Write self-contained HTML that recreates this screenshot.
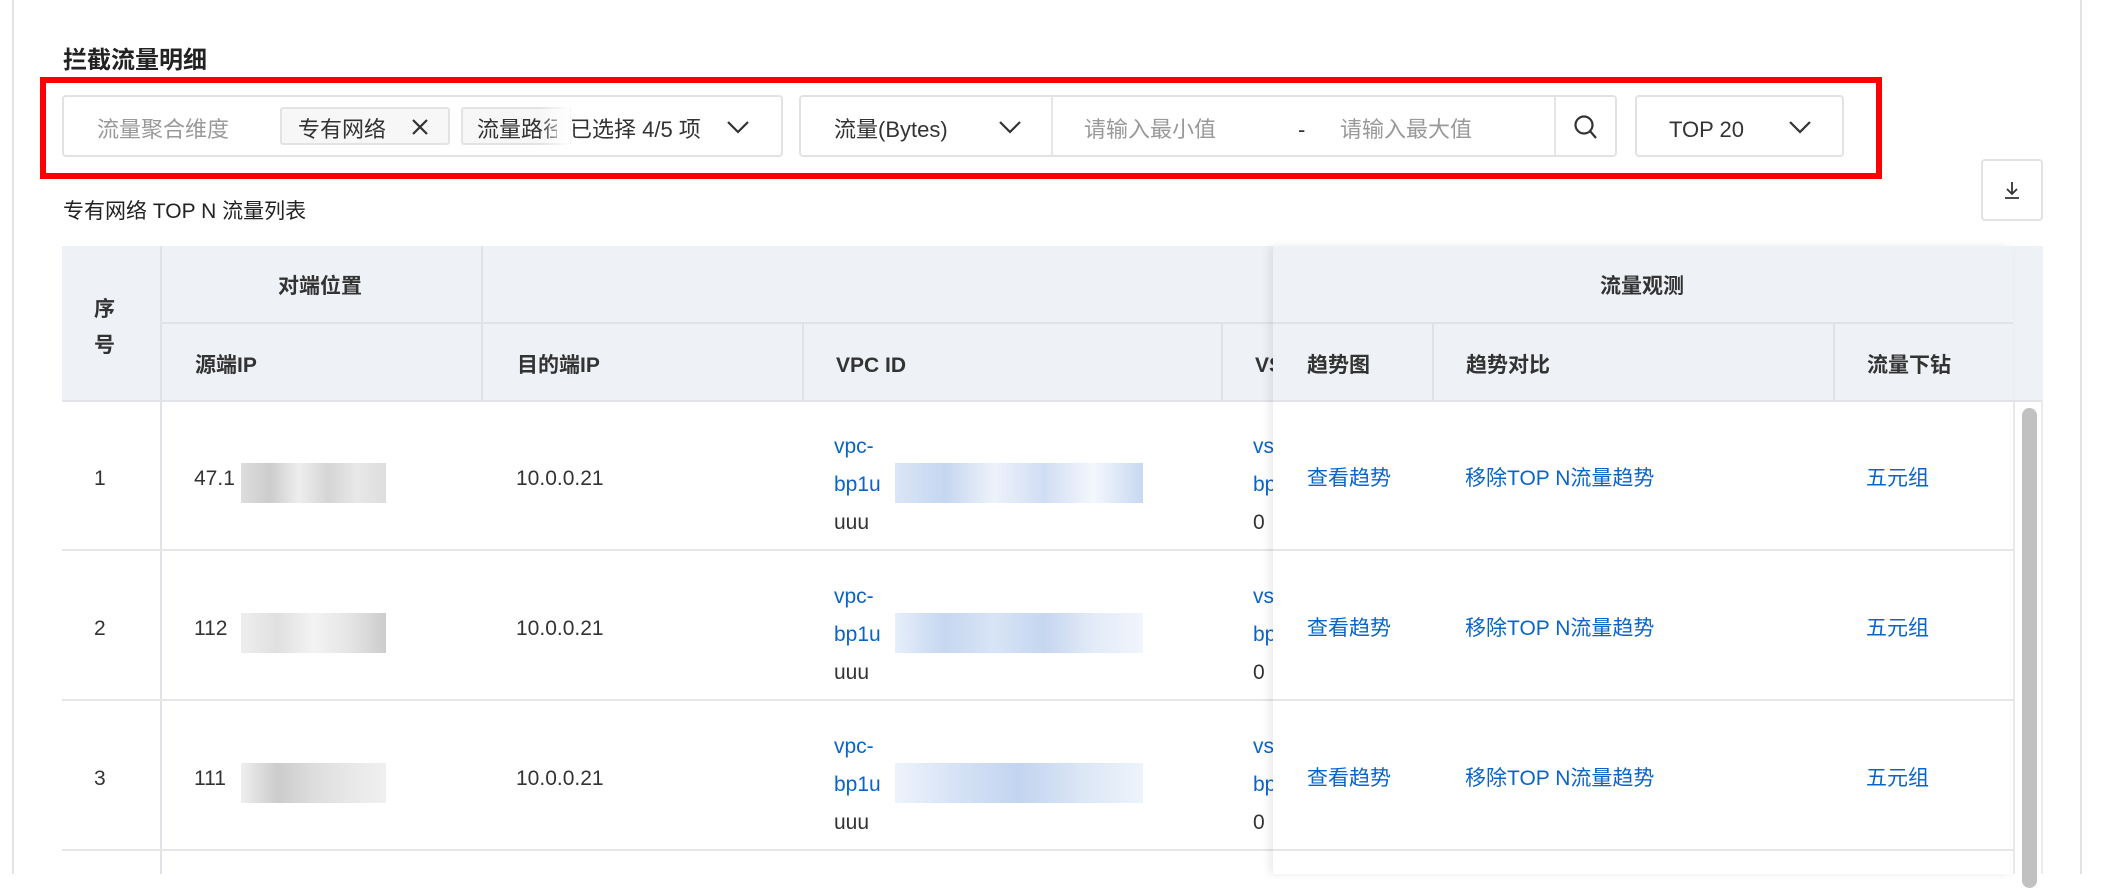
<!DOCTYPE html>
<html><head><meta charset="utf-8"><style>
*{margin:0;padding:0;box-sizing:border-box}
body{width:2102px;height:874px;background:#fff;position:relative;overflow:hidden;font-family:"Liberation Sans","Noto Sans CJK SC",sans-serif;color:#333;font-size:21px}
.a{position:absolute;white-space:nowrap;line-height:30px}
.box{position:absolute;border:2px solid #e2e2e2;border-radius:4px;background:#fff}
.ph{color:#999}
.tag{position:absolute;background:#f7f7f7;border:2px solid #e3e3e3;border-radius:3px;height:38px;top:107px}
.hd{background:#eef1f6}
.vl{position:absolute;width:2px;background:#dfe2e7}
.hl{position:absolute;height:2px;background:#e6e6e6}
.b{font-weight:bold}
.lk{color:#0a64c8}
.blk{position:absolute}
</style></head><body>
<div class="a" style="left:12px;top:0;width:2px;height:874px;background:#e3e3e3"></div>
<div class="a" style="left:2080px;top:0;width:2px;height:874px;background:#e3e3e3"></div>

<div class="a b" style="left:63px;top:46px;font-size:24px;color:#222">拦截流量明细</div>

<div class="a" style="left:40px;top:77px;width:1842px;height:102px;border:6px solid #f00"></div>

<div class="box" style="left:62px;top:95px;width:721px;height:62px"></div>
<div class="a ph" style="left:97px;top:115px;font-size:22px">流量聚合维度</div>
<div class="tag" style="left:280px;width:170px"></div>
<div class="a" style="left:298px;top:115px;font-size:22px">专有网络</div>
<svg class="a" style="left:410px;top:117px" width="20" height="20" viewBox="0 0 20 20"><path d="M3 3L17 17M17 3L3 17" stroke="#333" stroke-width="2.2"/></svg>
<div class="tag" style="left:461px;width:110px;border-right:none"></div>
<div class="a" style="left:477px;top:115px;font-size:22px;width:80px;overflow:hidden">流量路径</div>
<div class="a" style="left:540px;top:105px;width:30px;height:42px;background:linear-gradient(90deg,rgba(255,255,255,0),#fff)"></div>
<div class="a" style="left:570px;top:115px;font-size:22px">已选择 4/5 项</div>
<svg class="a" style="left:726px;top:119px" width="24" height="16" viewBox="0 0 24 16"><path d="M2 3L12 13L22 3" stroke="#333" stroke-width="2.2" fill="none"/></svg>

<div class="box" style="left:799px;top:95px;width:818px;height:62px"></div>
<div class="a" style="left:834px;top:115px;font-size:22px">流量(Bytes)</div>
<svg class="a" style="left:998px;top:119px" width="24" height="16" viewBox="0 0 24 16"><path d="M2 3L12 13L22 3" stroke="#333" stroke-width="2.2" fill="none"/></svg>
<div class="a" style="left:1051px;top:97px;width:2px;height:58px;background:#e6e6e6"></div>
<div class="a ph" style="left:1084px;top:115px;font-size:22px">请输入最小值</div>
<div class="a" style="left:1298px;top:115px;font-size:22px">-</div>
<div class="a ph" style="left:1340px;top:115px;font-size:22px">请输入最大值</div>
<div class="a" style="left:1554px;top:97px;width:2px;height:58px;background:#e6e6e6"></div>
<svg class="a" style="left:1572px;top:113px" width="28" height="28" viewBox="0 0 28 28"><circle cx="12" cy="12" r="8.5" stroke="#333" stroke-width="2.2" fill="none"/><path d="M18 18L24 25" stroke="#333" stroke-width="2.2"/></svg>

<div class="box" style="left:1635px;top:95px;width:209px;height:62px"></div>
<div class="a" style="left:1669px;top:115px;font-size:22px">TOP 20</div>
<svg class="a" style="left:1788px;top:119px" width="24" height="16" viewBox="0 0 24 16"><path d="M2 3L12 13L22 3" stroke="#333" stroke-width="2.2" fill="none"/></svg>

<div class="box" style="left:1981px;top:159px;width:62px;height:62px"></div>
<svg class="a" style="left:2002px;top:180px" width="20" height="20" viewBox="0 0 20 20"><path d="M10 2V14M5 9L10 14L15 9M3 18H17" stroke="#333" stroke-width="1.8" fill="none"/></svg>

<div class="a" style="left:63px;top:197px;font-size:21px;color:#222">专有网络 TOP N 流量列表</div>

<div class="a hd" style="left:62px;top:246px;width:1981px;height:155px"></div>
<div class="hl" style="left:161px;top:322px;width:1852px;background:#dfe2e7"></div>
<div class="hl" style="left:62px;top:400px;width:1981px;background:#e2e4e8"></div>
<div class="vl" style="left:160px;top:246px;height:628px"></div>
<div class="vl" style="left:481px;top:246px;height:155px"></div>
<div class="vl" style="left:802px;top:323px;height:78px"></div>
<div class="vl" style="left:1221px;top:323px;height:78px"></div>
<div class="a b" style="left:94px;top:292px;line-height:36px;white-space:normal;width:24px">序<br>号</div>
<div class="a b" style="left:278px;top:272px">对端位置</div>
<div class="a b" style="left:195px;top:351px">源端IP</div>
<div class="a b" style="left:517px;top:351px">目的端IP</div>
<div class="a b" style="left:836px;top:351px">VPC ID</div>
<div class="a b" style="left:1255px;top:351px">VS</div>

<div class="hl" style="left:62px;top:549px;width:1951px"></div>
<div class="hl" style="left:62px;top:699px;width:1951px"></div>
<div class="hl" style="left:62px;top:849px;width:1951px"></div>

<div class="a" style="left:94px;top:464px">1</div>
<div class="a" style="left:94px;top:614px">2</div>
<div class="a" style="left:94px;top:764px">3</div>
<div class="a" style="left:194px;top:464px">47.1</div>
<div class="a" style="left:194px;top:614px">112</div>
<div class="a" style="left:194px;top:764px">111</div>
<div class="blk" style="left:241px;top:463px;width:145px;height:40px;background:linear-gradient(90deg,#ddd,#ccc,#eee,#d5d5d5,#e8e8e8,#ddd)"></div>
<div class="blk" style="left:241px;top:613px;width:145px;height:40px;background:linear-gradient(90deg,#eee,#e0e0e0,#f3f3f3,#e5e5e5,#ccc)"></div>
<div class="blk" style="left:241px;top:763px;width:145px;height:40px;background:linear-gradient(90deg,#eee,#ccc,#ddd,#e8e8e8,#f0f0f0)"></div>
<div class="a" style="left:516px;top:464px">10.0.0.21</div>
<div class="a" style="left:516px;top:614px">10.0.0.21</div>
<div class="a" style="left:516px;top:764px">10.0.0.21</div>

<div class="a lk" style="left:834px;top:428px;line-height:38px;white-space:normal;width:60px">vpc-<br>bp1u<br><span style="color:#333">uuu</span></div>
<div class="a lk" style="left:834px;top:578px;line-height:38px;white-space:normal;width:60px">vpc-<br>bp1u<br><span style="color:#333">uuu</span></div>
<div class="a lk" style="left:834px;top:728px;line-height:38px;white-space:normal;width:60px">vpc-<br>bp1u<br><span style="color:#333">uuu</span></div>
<div class="blk" style="left:895px;top:463px;width:248px;height:40px;background:linear-gradient(90deg,#dbe6f6,#c5d6f0,#edf2fa,#d0def3,#f4f7fc,#c8d8f1)"></div>
<div class="blk" style="left:895px;top:613px;width:248px;height:40px;background:linear-gradient(90deg,#e6eefa,#c6d7f0,#d8e4f6,#c5d6f0,#e3ebf8,#f1f5fc)"></div>
<div class="blk" style="left:895px;top:763px;width:248px;height:40px;background:linear-gradient(90deg,#eef3fb,#d6e2f5,#c2d4ef,#dbe6f6,#eef3fb)"></div>
<div class="a lk" style="left:1253px;top:428px;line-height:38px;white-space:normal;width:30px">vs<br>bp<br><span style="color:#333">0</span></div>
<div class="a lk" style="left:1253px;top:578px;line-height:38px;white-space:normal;width:30px">vs<br>bp<br><span style="color:#333">0</span></div>
<div class="a lk" style="left:1253px;top:728px;line-height:38px;white-space:normal;width:30px">vs<br>bp<br><span style="color:#333">0</span></div>

<div class="a" style="left:1273px;top:246px;width:740px;height:628px;background:#fff;box-shadow:-4px 0 8px rgba(0,0,0,0.08)"></div>
<div class="a hd" style="left:1273px;top:246px;width:740px;height:155px"></div>
<div class="hl" style="left:1273px;top:322px;width:740px;background:#dfe2e7"></div>
<div class="hl" style="left:1273px;top:400px;width:740px;background:#e2e4e8"></div>
<div class="vl" style="left:1432px;top:323px;height:78px"></div>
<div class="vl" style="left:1833px;top:323px;height:78px"></div>
<div class="a b" style="left:1600px;top:272px">流量观测</div>
<div class="a b" style="left:1307px;top:351px">趋势图</div>
<div class="a b" style="left:1466px;top:351px">趋势对比</div>
<div class="a b" style="left:1867px;top:351px">流量下钻</div>
<div class="hl" style="left:1273px;top:549px;width:740px"></div>
<div class="hl" style="left:1273px;top:699px;width:740px"></div>
<div class="hl" style="left:1273px;top:849px;width:740px"></div>
<div class="a lk" style="left:1307px;top:464px">查看趋势</div>
<div class="a lk" style="left:1307px;top:614px">查看趋势</div>
<div class="a lk" style="left:1307px;top:764px">查看趋势</div>
<div class="a lk" style="left:1465px;top:464px">移除TOP N流量趋势</div>
<div class="a lk" style="left:1465px;top:614px">移除TOP N流量趋势</div>
<div class="a lk" style="left:1465px;top:764px">移除TOP N流量趋势</div>
<div class="a lk" style="left:1866px;top:464px">五元组</div>
<div class="a lk" style="left:1866px;top:614px">五元组</div>
<div class="a lk" style="left:1866px;top:764px">五元组</div>

<div class="a" style="left:2013px;top:401px;width:2px;height:473px;background:#e8e8e8"></div>
<div class="a" style="left:2022px;top:408px;width:15px;height:480px;background:#c1c1c1;border-radius:8px"></div>
<div class="a" style="left:2041px;top:401px;width:2px;height:473px;background:#ececec"></div>
</body></html>
